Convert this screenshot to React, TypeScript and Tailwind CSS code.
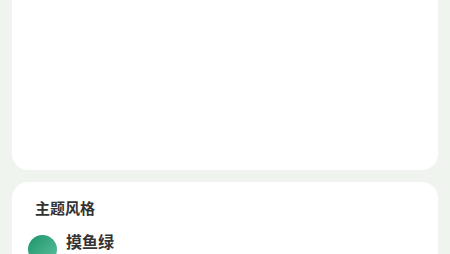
export default function App() {
  return (
    <div
      className="min-h-[254px] w-[450px] overflow-hidden bg-[#eff4ee] px-3"
      style={{ fontFamily: '"Noto Sans CJK SC", "Noto Sans", sans-serif' }}
    >
      <div className="h-[170px] rounded-b-[16px] bg-white" />
      <div className="mt-3 rounded-t-[16px] bg-white px-4 pt-[15px] pb-4">
        <div className="pl-[7px] text-[15px] font-bold leading-[22px] text-[#333]">主题风格</div>
        <div className="mt-[12px] flex items-start gap-[9px]">
          <div className="mt-[4px] h-[29px] w-[29px] shrink-0 rounded-full bg-gradient-to-br from-[#16946b] to-[#5cc29f]" />
          <div>
            <div className="text-[16px] font-bold leading-[20px] text-[#333]">摸鱼绿</div>
            <div className="mt-[2px] text-[12px] leading-[16px] text-[#999]">清新护眼的绿色主题</div>
          </div>
        </div>
      </div>
    </div>
  );
}
